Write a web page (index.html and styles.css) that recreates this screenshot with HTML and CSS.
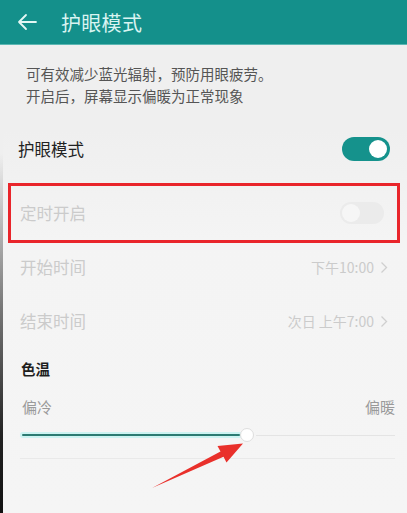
FILE: index.html
```html
<!DOCTYPE html>
<html lang="zh">
<head>
<meta charset="utf-8">
<title>护眼模式</title>
<link rel="stylesheet" href="styles.css">
</head>
<body>
<div class="page">
  <header class="topbar">
    <svg class="back" width="22" height="18" viewBox="0 0 22 18"><path d="M20 9H3M10 2L3 9l7 7" fill="none" stroke="#e4f7f4" stroke-width="1.8" stroke-linecap="round" stroke-linejoin="round"/></svg>
    <span class="title">护眼模式</span>
  </header>

  <p class="desc">可有效减少蓝光辐射，预防用眼疲劳。<br>开启后，屏幕显示偏暖为正常现象</p>

  <div class="row main-row">
    <span class="label dark">护眼模式</span>
    <span class="switch on"><span class="knob"></span></span>
  </div>

  <div class="row boxed">
    <span class="label faint">定时开启</span>
    <span class="switch off"><span class="knob"></span></span>
  </div>

  <div class="row time-row">
    <span class="label faint">开始时间</span>
    <span class="value">下午10:00<svg class="chev" width="8" height="13" viewBox="0 0 8 13"><path d="M1.5 1.5l5 5-5 5" fill="none" stroke="#cfcfcf" stroke-width="1.3"/></svg></span>
  </div>

  <div class="row time-row second">
    <span class="label faint">结束时间</span>
    <span class="value">次日 上午7:00<svg class="chev" width="8" height="13" viewBox="0 0 8 13"><path d="M1.5 1.5l5 5-5 5" fill="none" stroke="#cfcfcf" stroke-width="1.3"/></svg></span>
  </div>

  <div class="section-title">色温</div>

  <div class="temp-labels">
    <span>偏冷</span>
    <span>偏暖</span>
  </div>

  <div class="slider">
    <div class="fill" style="width: 218px"></div>
    <div class="thumb"></div>
    <div class="rest"></div>
  </div>

  <div class="divider"></div>

  <svg class="arrow" width="407" height="513" viewBox="0 0 407 513"><polygon points="152,488 220.5,451.5 217.5,446 243,443.5 226.5,462.5 223.5,456.8" fill="#e9302b"/></svg>
</div>
</body>
</html>
```

FILE: styles.css
```css
html, body {
  margin: 0;
  padding: 0;
}

body {
  width: 407px;
  height: 513px;
  overflow: hidden;
  background: #f3f3f3;
  font-family: "Noto Sans CJK SC", "Noto Sans", sans-serif;
}

.page {
  position: relative;
  width: 407px;
  height: 513px;
  background: linear-gradient(#efefef 0, #efefef 130px, #f4f4f4 240px, #f5f5f5 100%);
  border-left: 3px solid #999;
  border-image: linear-gradient(#efefef 0, #efefef 30%, #c8c8c8 40%, #777 60%, #222 85%, #111 100%) 1;
  box-sizing: border-box;
}

.topbar {
  height: 45px;
  margin-left: -3px;
  background: #14908b;
  display: flex;
  align-items: center;
  padding-left: 16px;
  border-bottom: 1px solid #5cb7b3;
  box-sizing: border-box;
}

.back {
  display: block;
}

.title {
  margin-left: 23px;
  font-size: 20px;
  color: #d9f4f1;
  letter-spacing: 0.3px;
}

.desc {
  margin: 18px 0 0 23px;
  font-size: 14.5px;
  line-height: 22px;
  color: #555555;
}

.row {
  display: flex;
  align-items: center;
  justify-content: space-between;
}

.main-row {
  height: 48px;
  margin-top: 18px;
  padding: 0 17px 0 15px;
}

.label {
  font-size: 16.5px;
}

.dark {
  color: #222222;
}

.faint {
  color: #cbcbcb;
}

.switch {
  position: relative;
  width: 48px;
  height: 24px;
  border-radius: 12px;
  box-sizing: border-box;
}

.switch.on {
  background: #15928c;
}

.switch.on .knob {
  position: absolute;
  right: 3px;
  top: 3px;
  width: 18px;
  height: 18px;
  border-radius: 50%;
  background: #ffffff;
}

.switch.off {
  background: #ebebeb;
  width: 44px;
  height: 22px;
}

.switch.off .knob {
  position: absolute;
  left: 2px;
  top: 2px;
  width: 18px;
  height: 18px;
  border-radius: 50%;
  background: #f6f6f6;
}

.boxed {
  height: 60px;
  margin: 10px 7px 0 5px;
  border: 3px solid #e9252b;
  padding: 0 13px 0 9px;
  box-sizing: border-box;
}

.time-row {
  height: 48px;
  padding: 0 19px 0 17px;
}

.time-row.second {
  margin-top: 6px;
}

.value {
  display: flex;
  align-items: center;
  gap: 6px;
  font-size: 14px;
  color: #cbcbcb;
}

.chev {
  display: block;
}

.section-title {
  margin: 12px 0 0 18px;
  height: 24px;
  line-height: 24px;
  font-size: 14.5px;
  font-weight: 700;
  color: #1e1e1e;
}

.temp-labels {
  display: flex;
  justify-content: space-between;
  margin: 14px 12px 0 19px;
  height: 24px;
  line-height: 24px;
  font-size: 15px;
  color: #9a9a9a;
}

.slider {
  display: flex;
  align-items: center;
  height: 20px;
  margin: 6px 12px 0 19px;
}

.fill {
  height: 2px;
  background: #2c7b72;
  box-shadow: 0 0 0 2px #cdf4f2;
  border-radius: 1px;
}

.thumb {
  width: 14px;
  height: 14px;
  border-radius: 50%;
  background: #ffffff;
  border: 1px solid #dedede;
  box-sizing: border-box;
  flex: none;
  margin: 0 2px 0 0;
}

.rest {
  flex: 1;
  height: 1px;
  background: #e4e4e4;
}

.divider {
  height: 1px;
  margin: 13px 12px 0 17px;
  background: #e9e9e9;
}

.arrow {
  position: absolute;
  left: -3px;
  top: 0;
  pointer-events: none;
}
```
